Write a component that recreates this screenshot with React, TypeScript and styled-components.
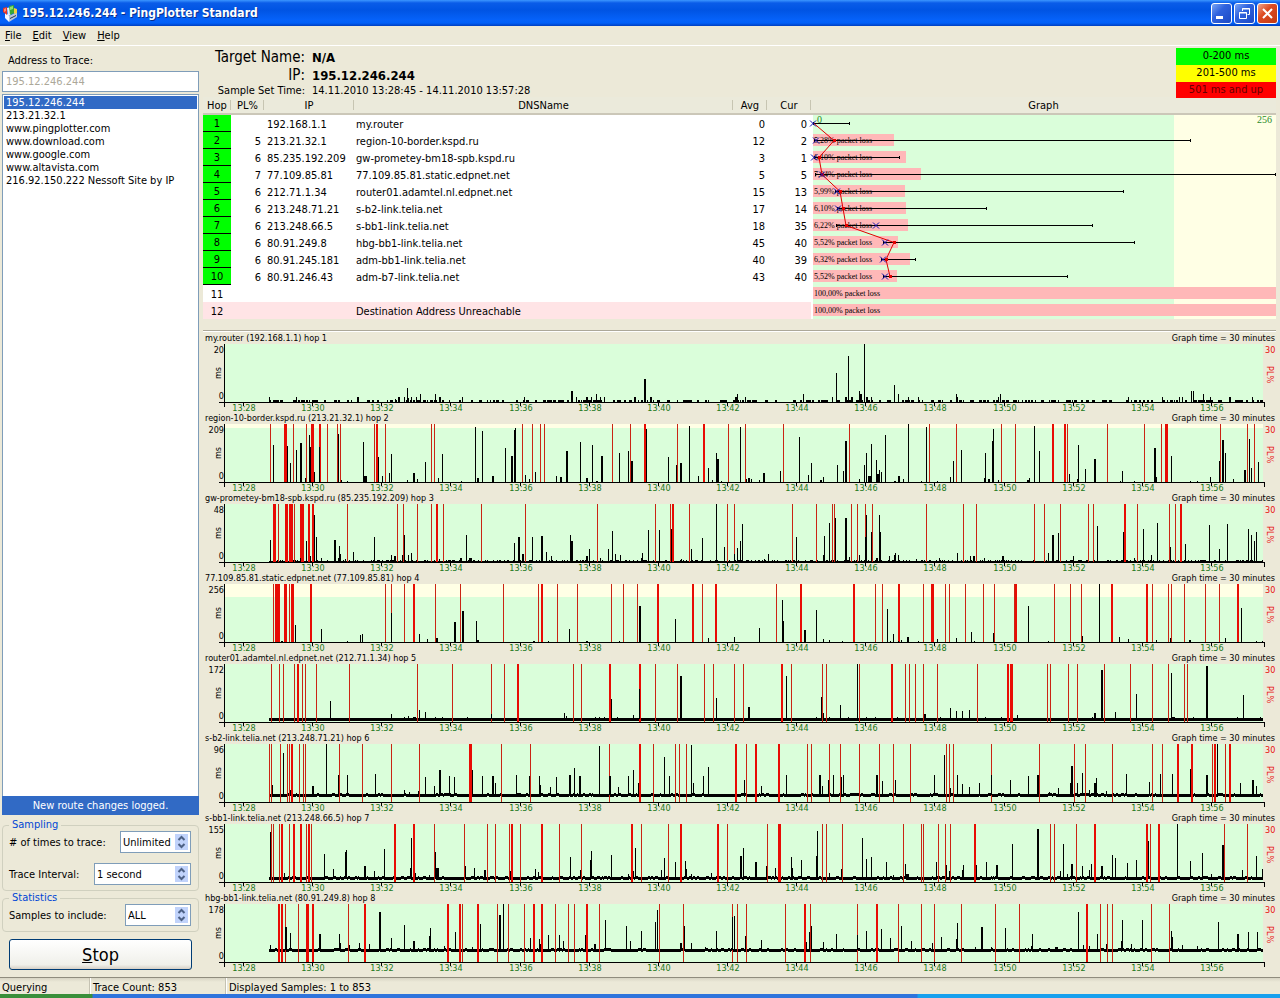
import React from "react";
import styled, { createGlobalStyle, css } from "styled-components";

const SANS = `"DejaVu Sans Condensed", "DejaVu Sans", "Liberation Sans", sans-serif`;
const FACE = "#ece9d8";
const BLUE = "#316ac5";

const Global = createGlobalStyle`
  * { box-sizing: border-box; }
  body { margin: 0; background: ${FACE}; font: 11px/13px ${SANS}; color: #000; }
  button, input { font: inherit; color: inherit; }
`;

const Window = styled.div`
  display: flex;
  flex-direction: column;
  min-height: 100vh;
`;

/* ---------- title bar and menu ---------- */

const TitleBar = styled.header`
  display: flex;
  align-items: center;
  height: 26px;
  padding: 0 2px;
  background: linear-gradient(#3c96ff 0, #0a5ce8 3px, #0054e3 10px, #0562fa 20px, #0160f8 23px, #003fc0 26px);
`;

const AppTitle = styled.h1`
  flex: 1;
  margin: 0 0 0 5px;
  font: bold 12px/26px ${SANS};
  color: #fff;
  text-shadow: 1px 1px #0a2f8c;
`;

const Caption = styled.button<{ $close?: boolean }>`
  width: 21px;
  height: 21px;
  margin-left: 2px;
  padding: 0;
  border: 1px solid #fff;
  border-radius: 3px;
  background: ${(p) =>
    p.$close
      ? "linear-gradient(135deg, #f0a58c, #dd4b22 40%, #c33a12)"
      : "linear-gradient(135deg, #7ba6f5, #2f62de 40%, #1c49c4)"};
  svg { display: block; }
`;

const MenuBar = styled.nav`
  display: flex;
  gap: 11px;
  height: 20px;
  padding-left: 5px;
  border-bottom: 1px solid #fff;
`;

const MenuLink = styled.a`
  color: #000;
  line-height: 19px;
  text-decoration: none;
`;

/* ---------- sidebar ---------- */

const Body = styled.div`
  display: flex;
  flex: 1;
`;

const Sidebar = styled.aside`
  display: flex;
  flex-direction: column;
  width: 199px;
  padding: 0 0 7px 2px;
`;

const AddressLabel = styled.label`
  padding: 8px 0 4px 6px;
`;

const AddressInput = styled.input`
  height: 21px;
  padding: 0 3px;
  border: 1px solid #7f9db9;
  background: #fff;
  &:disabled { color: #aca899; }
`;

const AddressList = styled.ul`
  flex: 1;
  margin: 2px 0 0;
  padding: 1px;
  border: 1px solid #7f9db9;
  border-bottom: 0;
  background: #fff;
  list-style: none;
`;

const AddressItem = styled.button<{ $selected?: boolean }>`
  display: block;
  width: 100%;
  height: 13px;
  padding: 0 2px;
  border: 0;
  background: ${(p) => (p.$selected ? BLUE : "transparent")};
  color: ${(p) => (p.$selected ? "#fff" : "#000")};
  text-align: left;
`;

const Notice = styled.div`
  height: 19px;
  margin-bottom: 4px;
  background: ${BLUE};
  color: #fff;
  line-height: 19px;
  text-align: center;
`;

const Group = styled.fieldset`
  display: flex;
  flex-direction: column;
  gap: 10px;
  margin: 0 0 1px;
  padding: 0 7px 5px 6px;
  border: 1px solid #d0d0bf;
  border-radius: 4px;
`;

const GroupTitle = styled.legend`
  padding: 0 3px;
  color: #0046d5;
  line-height: 12px;
`;

const Field = styled.div`
  display: flex;
  align-items: center;
  justify-content: space-between;
`;

const SpinBox = styled.div<{ $width: number }>`
  display: flex;
  width: ${(p) => p.$width}px;
  height: 22px;
  border: 1px solid #7f9db9;
  background: #fff;
`;

const SpinInput = styled.input`
  flex: 1;
  min-width: 0;
  padding: 0 2px;
  border: 0;
  background: transparent;
`;

const SpinButtons = styled.div`
  display: flex;
  flex-direction: column;
  width: 13px;
  margin: 2px;
`;

const SpinButton = styled.button`
  flex: 1;
  padding: 0;
  border: 0;
  background: #c1d3fb;
  svg { display: block; margin: 0 auto; }
`;

const StopButton = styled.button`
  height: 31px;
  margin: 6px 7px 0;
  border: 1px solid #003c74;
  border-radius: 3px;
  background: linear-gradient(#fff, #f0f0ea 85%, #d6d0c5);
  font-size: 18px;
  line-height: 28px;
`;

/* ---------- target summary ---------- */

const Main = styled.main`
  flex: 1;
  min-width: 0;
  padding: 0 4px 5px 2px;
  margin-left: 2px;
`;

const Summary = styled.section`
  display: flex;
  justify-content: space-between;
  height: 51px;
  padding-top: 2px;
`;

const Target = styled.dl`
  display: grid;
  grid-template-columns: 102px auto;
  grid-template-rows: 19px 17px 13px;
  column-gap: 7px;
  align-items: center;
  margin: 0;
  dt { text-align: right; white-space: nowrap; }
  dd { margin: 0; }
`;

const BigTerm = styled.dt`
  font-size: 15px;
`;

const BoldValue = styled.dd`
  font-size: 13px;
  font-weight: bold;
`;

const Legend = styled.ul`
  width: 100px;
  margin: 0;
  padding: 0;
  list-style: none;
`;

const LegendItem = styled.li<{ $color: string; $text?: string }>`
  height: 17px;
  background: ${(p) => p.$color};
  color: ${(p) => p.$text || "#000"};
  line-height: 15px;
  text-align: center;
  &:last-child { height: 16px; }
`;

/* ---------- trace table ---------- */

const TraceTable = styled.table`
  width: 100%;
  border-collapse: separate;
  border-spacing: 0;
  table-layout: fixed;
  background: #fff;
`;

const HeadCell = styled.th`
  height: 18px;
  padding: 1px 0 0;
  border-bottom: 2px solid #cbc7b8;
  background: #ebeadb;
  font-weight: normal;
  &:not(:last-child) {
    background: linear-gradient(#c7c5b2, #c7c5b2) right 3px / 1px 10px no-repeat #ebeadb;
  }
`;

const Cell = styled.td<{ $right?: boolean; $pad?: number }>`
  height: 17px;
  padding: 1px ${(p) => p.$pad ?? 3}px 0;
  text-align: ${(p) => (p.$right ? "right" : "left")};
  white-space: nowrap;
`;

const HopCell = styled.td<{ $ok: boolean }>`
  height: 17px;
  padding: 1px 0 0;
  line-height: 15px;
  text-align: center;
  ${(p) =>
    p.$ok &&
    css`
      border-bottom: 1px solid #000;
      background: #0f0;
    `}
`;

const TraceRow = styled.tr<{ $failed: boolean }>`
  background: ${(p) => (p.$failed ? "#ffe4e6" : "#fff")};
`;

const GraphCell = styled.td`
  padding: 0 0 0 2px;
  background: #fff;
  vertical-align: top;
  svg { display: block; }
`;

type Hop = {
  hop: number; pl?: number; ip?: string; name?: string; avg?: number; cur?: number;
  loss?: string; lossW?: number; line?: [number, number]; avgX?: number; curX?: number;
};

const HOPS: Hop[] = [
  { hop: 1, ip: "192.168.1.1", name: "my.router", avg: 0, cur: 0, line: [0, 36], avgX: 1, curX: 0 },
  { hop: 2, pl: 5, ip: "213.21.32.1", name: "region-10-border.kspd.ru", avg: 12, cur: 2, loss: "5,28", lossW: 81, line: [1, 377], avgX: 21, curX: 3 },
  { hop: 3, pl: 6, ip: "85.235.192.209", name: "gw-prometey-bm18-spb.kspd.ru", avg: 3, cur: 1, loss: "6,10", lossW: 93, line: [1, 86], avgX: 6, curX: 1 },
  { hop: 4, pl: 7, ip: "77.109.85.81", name: "77.109.85.81.static.edpnet.net", avg: 5, cur: 5, loss: "7,04", lossW: 108, line: [2, 462], avgX: 9, curX: 9 },
  { hop: 5, pl: 6, ip: "212.71.1.34", name: "router01.adamtel.nl.edpnet.net", avg: 15, cur: 13, loss: "5,99", lossW: 92, line: [22, 310], avgX: 27, curX: 24 },
  { hop: 6, pl: 6, ip: "213.248.71.21", name: "s-b2-link.telia.net", avg: 17, cur: 14, loss: "6,10", lossW: 93, line: [24, 173], avgX: 30, curX: 25 },
  { hop: 7, pl: 6, ip: "213.248.66.5", name: "s-bb1-link.telia.net", avg: 18, cur: 35, loss: "6,22", lossW: 95, line: [23, 279], avgX: 33, curX: 63 },
  { hop: 8, pl: 6, ip: "80.91.249.8", name: "hbg-bb1-link.telia.net", avg: 45, cur: 40, loss: "5,52", lossW: 85, line: [70, 321], avgX: 81, curX: 72 },
  { hop: 9, pl: 6, ip: "80.91.245.181", name: "adm-bb1-link.telia.net", avg: 40, cur: 39, loss: "6,32", lossW: 97, line: [68, 102], avgX: 73, curX: 70 },
  { hop: 10, pl: 6, ip: "80.91.246.43", name: "adm-b7-link.telia.net", avg: 43, cur: 40, loss: "5,52", lossW: 84, line: [70, 254], avgX: 77, curX: 72 },
  { hop: 11, loss: "100,00", lossW: 463 },
  { hop: 12, name: "Destination Address Unreachable", loss: "100,00", lossW: 463 },
];

const ROW = 17;
const mid = (i: number) => i * ROW + 8;

function TraceGraph() {
  const answered = HOPS.filter((h) => h.line);
  return (
    <svg width="100%" height={HOPS.length * ROW} role="img" aria-label="Latency per hop" overflow="visible">
      <svg width="100%" height={HOPS.length * ROW} viewBox={`0 0 463 ${HOPS.length * ROW}`} preserveAspectRatio="none" overflow="visible">
        <rect width="463" height="204" fill="#ffffe5" />
        <rect width="361" height="204" fill="#dafeda" />
        {HOPS.map((h, i) => h.loss && <rect key={h.hop} y={i * ROW + 2} width={h.lossW} height="12" fill="#ffb8b8" />)}
      </svg>
      <g fontFamily="Liberation Serif, serif" fontSize="8">
        {HOPS.map((h, i) => h.loss && <text key={h.hop} x="1" y={mid(i) + 3}>{h.loss}% packet loss</text>)}
      </g>
      <g fontFamily="Liberation Serif, serif" fontSize="10" fill="#2a8a2a">
        <text x="4" y="8">0</text>
        <text x="100%" dx="-4" y="8" textAnchor="end">256</text>
      </g>
      <svg width="100%" height={HOPS.length * ROW} viewBox={`0 0 463 ${HOPS.length * ROW}`} preserveAspectRatio="none" overflow="visible">
        <g stroke="#000" shapeRendering="crispEdges">
          {answered.map((h, i) => (
            <path key={h.hop} d={`M${h.line![0]} ${mid(i) + 0.5}H${h.line![1]}M${h.line![1] + 0.5} ${mid(i) - 1}v3M${h.line![0] + 0.5} ${mid(i) - 1}v3`} />
          ))}
        </g>
        <polyline fill="none" stroke="#e00000" points={answered.map((h, i) => `${h.avgX} ${mid(i) + 0.5}`).join(" ")} />
        {answered.map((h, i) => (
          <g key={h.hop}>
            {i > 0 && <rect x={h.avgX! - 1} y={mid(i) - 1} width="3" height="3" fill="#e00000" />}
            <path stroke="#1010b0" d={`M${h.curX! - 3} ${mid(i) - 2.5}l6 6m0-6l-6 6`} />
          </g>
        ))}
      </svg>
    </svg>
  );
}

/* ---------- timeline strips ---------- */

const Timelines = styled.section`
  margin-top: 11px;
  border-top: 1px solid #aca899;
  box-shadow: inset 0 1px #fff;
  padding-top: 1px;
`;

const Strip = styled.article`
  display: grid;
  grid-template-columns: 22px minmax(0, 1fr) 11px;
  grid-template-rows: 12px 58px 10px;
  font-size: 9px;
  line-height: 12px;
`;

const StripHead = styled.header`
  display: flex;
  grid-column: 1 / -1;
  justify-content: space-between;
  padding: 0 1px 0 2px;
`;

const Scale = styled.div`
  display: flex;
  flex-direction: column;
  justify-content: space-between;
  align-items: flex-end;
  height: 58px;
  padding-right: 1px;
`;

const LossScale = styled.div`
  display: flex;
  flex-direction: column;
  gap: 10px;
  color: #e81010;
`;

const Turned = styled.span<{ $up?: boolean }>`
  writing-mode: vertical-rl;
  transform: ${(p) => (p.$up ? "rotate(180deg)" : "none")};
`;

const Plot = styled.svg`
  display: block;
  width: 100%;
  height: 68px;
  overflow: visible;
`;

const PLOT_W = 1040;
const PLOT_H = 58;

/* Each log holds "time:height*width" marks; time counts hundredths of a minute from the log's own start. */
const EARLY = -72;
const LATE = 1496;
const UNITS_PER_PX = 2.904;

type Mark = { left: number; h: number; w: number };
const parse = (log: string, start: number): Mark[] =>
  log.trim().split(/\s+/).filter(Boolean).map((item) => {
    const [head, w = "1"] = item.split("*");
    const [t, h = "58"] = head.split(":");
    const width = Number(w);
    const centre = (Number(t) + start) / UNITS_PER_PX;
    return { left: Math.round(centre + 0.2 - width / 2), h: Number(h), w: width };
  });

type StripData = {
  title: string; max: number; warn?: number; noise?: number; band?: number;
  lost: [string, string]; peaks: [string, string];
};

const STRIPS: StripData[] = [
  {
    title: "my.router (192.168.1.1) hop 1", max: 20, noise: 0.5,
    lost: ["", ""],
    peaks: [
      "201:5 213:2 278:5 459:5*2 567:3 577:5*2 593:5 602:14 605:4 614:5 628:5 640:8 684:8 697:5*2 760:5 942:5 1078:11*2 1093:5 1123:5*2 1137:5 1151:8 1162:5 1174:5 1262:5*2 1292:23*2 1309:5*2 1555:5*2 1560:8",
      "14:5 184:8 268:5 278:29 307:5*2 313:46 324:5*2 345:11 351:8*2 361:58 368:5*2 382:5 448:17 458:8 489:5 516:5 628:8 632:5 750:5 756:8 1128:5 1227:5 1276:5 1284:5 1309:11 1316:11 1345:8 1366:5 1423:5*2 1486:5",
    ],
  },
  {
    title: "region-10-border.kspd.ru (213.21.32.1) hop 2", max: 209, warn: 4,
    lost: [
      "204 248*3 271 309 326*3 348*2 368 399 408 507 514*2 538 672 680 934 963 989 1000 1198 1250 1292*2 1386 1463*2 1534",
      "16 124 316 550 629 757 798 909*2 944*2 951 1067 1175 1223 1238*3 1395 1473 1494",
    ],
    peaks: [
      "213:37 254:36 262:19 278:32 293:39*2 304:4 318:47 321:35 332:10 345:35 402:48 410:2 428:1 475:40 479:6*3 517:25 529:6 550:9 556:28 602:2 620:9*2 630:3 655:20 692:4 704:28 757:1 800:55 806:4*2 820:51 851:6*2 887:34 906:26*2 913:52 916:54 945:7 957:3 974:10 1033:6 1047:5*2 1065:31*2 1104:40 1124:4*2 1139:37 1153:1*2 1167:26*2 1218:29 1242:31 1253:21*2 1296:53 1360:25 1384:17 1397:19*2 1421:56 1447:6 1476:14 1488:2 1499:29 1504:23*2 1512:1 1567:55",
      "19:3 26:4*2 33:3 57:2 70:9*2 118:11 172:45 198:7 207:19 234:2*2 242:5 283:17 300:11 308:41*2 345:3 361:17 367:29 375:6*3 382:38 394:22 397:8*3 403:12 411:10 422:47 450:1*2 462:6*2 475:3 489:58 525:1 541:55 573:1 609:5 620:21 641:32 708:4 712:29 722:3*2 733:41 736:53 750:2 836:2*2 841:4 855:56 869:31 956:8 978:3 982:37 1003:13 1031:23*2 1103:1 1110:11 1146:1 1205:34*2 1209:5 1253:26 1308:1 1329:1 1366:5 1392:21 1402:42*2 1410:29 1433:3 1466:12*2 1479:43 1485:14 1506:20",
    ],
  },
  {
    title: "gw-prometey-bm18-spb.kspd.ru (85.235.192.209) hop 3", max: 48, band: 1,
    lost: [
      "216*3 227 251*3 264*4 274 296*4 314*2 328*2 426 573 590 629 672 688*2 707 817 945 1152 1322 1366 1373*2 1421 1531 1552",
      "152 222 268 274 323 339 364 384 541 649 686 855 884 931 1012 1026 1118*2 1154 1245 1264 1280*2",
    ],
    peaks: [
      "204:22 290:4 309:21 320:6 332:47 338:25 352:4 392:22*2 402:4 405:16 408:8 421:3 445:10 507:25 556:7 566:6*2 586:7 593:27 605:7 614:9 628:2 695:3 757:4*2 774:27 785:4*3 913:19 926:25*2 938:8*2 963:25 993:26*2 1004:10 1020:6 1076:27 1079:21*2 1124:6*2 1131:13 1162:4 1184:13 1198:31 1204:8 1221:7 1280:4 1285:9 1302:32 1334:32 1369:33 1397:3 1427:13 1459:24 1499:58 1523:15 1550:8 1560:14 1567:21",
      "7:38 70:3 82:8 164:25 242:7 245:26 260:39 277:44 308:44*2 316:5 345:7 362:25 367:47 382:30 398:4*2 405:47 408:30 434:6 447:7 451:9 458:7 512:3 577:4 631:9 669:6 679:6*2 708:4 764:6*2 895:9 909:27*2 924:29 968:6 1038:36 1114:30 1145:4 1172:33 1194:7 1212:39 1250:15 1293:18 1363:37 1392:13 1415:38 1476:33 1485:27 1494:21 1499:30",
    ],
  },
  {
    title: "77.109.85.81.static.edpnet.net (77.109.85.81) hop 4", max: 256, warn: 13,
    lost: [
      "213 225*5 248*3 259 268*3 320*2 538 554 593 621*2 684 754 879 983 993*2 1038 1096 1194 1230 1270 1330*2 1431*2 1459 1496*2",
      "106 177*2 331*2 393 414 462*2 532 559*3 596 608 654 707 739 795 801*2 913 960 992 1080*2 1181*2 1197 1242 1252 1290 1351 1390 1446*2",
    ],
    peaks: [
      "237:1*2 275:17 352:13 426:1 466:7 472:8 556:29 637:8 660:3 686:4*2 740:20*2 764:31*2 802:21 806:2*2 970:1*2 1012:1 1073:13 1124:1*2 1218:1 1278:36*2 1380:23 1476:4 1552:5",
      "57:14 121:42 124:21 185:3 189:12*2 222:32 242:3 260:2 297:1 428:33 435:1 446:8 458:1 468:2 486:5*2 516:1 573:3 628:4 672:10 679:1 736:9 838:36 895:1 994:6 1043:58 1102:5 1128:3 1209:2 1250:4 1307:2*2 1410:4 1456:34 1499:1 1517:1",
    ],
  },
  {
    title: "router01.adamtel.nl.edpnet.net (212.71.1.34) hop 5", max: 172, band: 4, noise: 0.03,
    lost: [
      "207 230 242 274 282*2 297 306 338 432 631 733 846 884 921*2 1084 1107 1190*2 1278*2 1322 1386 1465 1491 1550",
      "10 122*2 149 240 249 347 441*2 480 492 509 532 573 689 777*2 788*3 892 901 953 980 1058 1134 1197 1242 1290 1299",
    ],
    peaks: [
      "378:21 556:8 593:5 605:6 621:5*3 637:12 655:10 684:5 702:5 776:5 844:8 1058:9 1062:6 1147:5 1160:5 1174:5 1194:23 1211:5 1258:7 1274:33 1397:46*2 1499:24",
      "26:15*2 135:46 222:5 237:25 242:9 260:5 291:17 313:5 339:58 365:5 393:5 455:5 536:8*2 580:5 611:14 629:11 646:11 664:12 712:5 757:5 805:7 1024:5 1031:9*2 1051:52*2 1090:10 1151:28 1252:49 1257:5*3 1316:5 1356:56*2 1445:5 1460:27 1510:5",
    ],
  },
  {
    title: "s-b2-link.telia.net (213.248.71.21) hop 6", max: 96, band: 8, noise: 0.2,
    lost: [
      "201 207 234 254 260 267*2 288 300 306 403 472 554 637 785*3 875 960 1187 1278*2 1317 1380 1392 1412 1556*2",
      "18 46*2 113*2 196 207 260 291 345 405 446 495 600 608 619 728 869 971 1003 1081 1197 1227 1272*2 1312*2 1372 1379*2 1409 1423*2",
    ],
    peaks: [
      "210:17 242:49 262:12 327:16*2 367:58 400:27 428:27 509:28 593:12 606:10 634:11 655:25 680:16 697:32*2 722:9*3 724:26 737:25 791:32 820:26 851:26*2 858:19 919:27 925:9*4 957:26 985:26 989:17 1018:15 1035:25 1072:27*2 1087:34 1101:26*2 1158:16 1160:56 1190:26*2 1215:15 1242:26 1258:32 1273:19 1348:45 1363:26 1425:57 1431:19 1462:26 1476:35",
      "13:22 62:16 135:27 232:27*2 239:16 257:22 271:27 294:25 300:27 398:27*2 413:21 451:22 564:27 593:47 611:14 631:27 646:18 664:15 695:19 730:27 785:22 838:26 865:27*2 898:10 925:14 960:19 964:36*2 980:19 994:29 1014:12 1031:19*2 1035:24 1064:11 1122:28 1189:20 1221:28 1255:28 1308:33 1356:27*2 1386:58 1453:19 1490:22*2 1499:16",
    ],
  },
  {
    title: "s-bb1-link.telia.net (213.248.66.5) hop 7", max: 155, band: 5, noise: 0.3,
    lost: [
      "207 213 230 237*2 259 273*2 292*2 307 314*2 323 566*2 621*2 681 768 834 857 898 906*2 931 993*2 1043 1107 1253*2 1282 1360 1397*2 1504*2 1531",
      "79 115*3 239 249 297 475 527 532 576 596 611 680*2 901 913 977 1031*2 1181*2 1191 1217*2 1406 1473",
    ],
    peaks: [
      "204:50 245:9 361:28 387:13 421:30 423:32 479:16*2 507:11 535:33 609:14 612:44 625:9 665:7 683:30 688:14*3 770:16 797:14 827:12*2 901:11 974:13 982:10 1075:25 1104:12 1134:22 1136:31 1194:27 1242:8 1258:11 1264:34 1340:12 1348:24 1380:20 1410:21 1412:13 1425:8 1485:9",
      "3:26*2 8:34 46:20*2 76:16 103:14 149:25 152:14 178:22 222:26 225:51 259:9 295:13 355:44 365:23 381:25 425:20 446:7 480:18 484:8*3 570:20 599:17 608:11 644:12 647:17 686:17 715:20 746:17*2 791:38 862:12 865:53*2 931:11 937:38 949:8 964:18*2 994:16 1014:12 1020:18 1051:16*2 1081:27 1090:24 1125:19 1151:22 1186:41 1270:58 1308:21 1343:29 1369:8 1402:37*2 1459:12 1499:26 1517:13",
    ],
  },
  {
    title: "hbg-bb1-link.telia.net (80.91.249.8) hop 8", max: 178, band: 13, noise: 0.25,
    lost: [
      "229*2 238*2 246 286 312*3 328*2 429 479*2 720*2 753*2 760 807*2 864 896 942 970*2 993*2 1030 1070 1087 1124*2 1158 1334 1403 1546 1560",
      "18 132 189*2 204 339 398*2 458 525 565 641 742 811 1007*2 1047 1067 1081 1194 1247",
    ],
    peaks: [
      "204:17 248:35*2 262:29 347:28*2 405:28 408:19 432:17 463:19 490:18 519:29 522:50*2 556:24 593:37 620:21*2 666:26*2 669:34 710:16 740:30 791:15 814:38 871:47*2 881:58 960:24 986:23 989:18 1011:27 1043:27 1055:21 1119:27 1147:18*2 1177:42 1238:36 1248:21 1282:31 1323:40 1326:52 1397:19*2 1406:36 1425:19 1467:15 1499:31 1544:45 1552:46",
      "16:26 60:22 193:20 202:30 207:36 242:20 280:28 341:27 367:31 411:33 437:24 468:36 498:21 557:19 585:25 629:23 631:39 684:15 703:35*2 730:15 770:34 845:16 849:28 919:15*3 982:50 997:17 1014:16 1038:28 1064:18 1107:21 1110:42 1137:18 1168:42 1252:31 1255:25 1284:17 1329:16 1389:40 1445:28*2 1476:30 1502:30",
    ],
  },
];

/* Jitter of the idle samples, repeatable from one render to the next. */
function floorPath(band: number, noise: number, seed: number) {
  let s = seed * 7919 + 13;
  const next = () => ((s = (s * 16807) % 2147483647) / 2147483647);
  let d = "";
  let run = 0;
  for (let x = 44; x < 1038; x++) {
    if (run <= 0) run = next() < noise * 0.5 ? 1 + Math.floor(next() * 3) : -1 - Math.floor(next() * 2);
    const up = run > 0 ? 1 : 0;
    run = run > 0 ? run - 1 : 0;
    if (band === 0) {
      if (up) d += `M${x} ${PLOT_H}v-2h1v2z`;
    } else {
      const thick = band === 1 ? 1 + (next() < 0.3 ? 1 : 0) : 3;
      const top = PLOT_H - band - (band > 4 ? up : 0) - (band === 1 ? thick - 1 : 0);
      d += `M${x} ${top}h1v${thick}h-1z`;
    }
  }
  return d;
}

const TIMES = Array.from({ length: 15 }, (_, i) => 28 + i * 2);
const tickX = (i: number) => 19 + Math.round(i * 69.14);

const bars = (marks: Mark[], foot: number) =>
  marks.map((m) => `M${m.left} ${PLOT_H - m.h}h${m.w}V${foot}h-${m.w}z`).join("");

function Timeline({ data, index }: { data: StripData; index: number }) {
  const lost = [...parse(data.lost[0], EARLY), ...parse(data.lost[1], LATE)];
  const peaks = [...parse(data.peaks[0], EARLY), ...parse(data.peaks[1], LATE)];
  const band = data.band ?? 0;
  const foot = band > 1 ? PLOT_H - band + 1 : PLOT_H;
  return (
    <Strip>
      <StripHead>
        <span>{data.title}</span>
        <span>Graph time = 30 minutes</span>
      </StripHead>
      <Scale>
        <span>{data.max}</span>
        <Turned $up>ms</Turned>
        <span>0</span>
      </Scale>
      <Plot role="img" aria-label={data.title}>
        <svg width="100%" height={PLOT_H} viewBox={`0 0 ${PLOT_W} ${PLOT_H}`} preserveAspectRatio="none">
          <g shapeRendering="crispEdges">
            <rect width="1038" height={PLOT_H} fill="#dafeda" />
            {data.warn && <rect width="1038" height={data.warn} fill="#ffffe5" />}
            {(band > 0 || data.noise) && <path d={floorPath(band, data.noise ?? 0, index + 1)} />}
            <path fill="#ca2414" d={bars(lost.filter((m) => m.w === 1), PLOT_H)} />
            <path fill="#e80c04" d={bars(lost.filter((m) => m.w > 1), PLOT_H)} />
            <path d={bars(peaks, foot)} />
          </g>
        </svg>
        <g stroke="#000" shapeRendering="crispEdges">
          <path d="M-0.5 0v63" />
          <line x1="-6" x2="100%" y1="58.5" y2="58.5" />
        </g>
        <svg x="100%" width="1" height="68" overflow="visible">
          <path d="M-0.5 58v5" stroke="#000" />
        </svg>
        {TIMES.map((m, i) => (
          <svg key={m} x={`${(tickX(i) / PLOT_W) * 100}%`} overflow="visible">
            <path d="M-0.5 59v3" stroke="#000" shapeRendering="crispEdges" />
            <text y="67" textAnchor="middle" fill="#187818">13:{m}</text>
          </svg>
        ))}
      </Plot>
      <LossScale>
        <span>30</span>
        <Turned>PL%</Turned>
      </LossScale>
    </Strip>
  );
}

/* ---------- status bar ---------- */

const StatusBar = styled.footer`
  display: flex;
  height: 17px;
  border-top: 1px solid #8f8c7d;
  background: linear-gradient(#d8d5c4, #ece9d8 4px);
`;

const StatusPane = styled.span<{ $width?: number }>`
  width: ${(p) => (p.$width ? `${p.$width}px` : "auto")};
  padding-left: 2px;
  line-height: 19px;
  & + & { padding-left: 4px; box-shadow: inset 1px 0 #c5c2b2, inset 2px 0 #fff; }
`;

const TaskbarEdge = styled.div`
  height: 4px;
  background: linear-gradient(90deg, #3a8f3a 0 92px, #2f74dc 93px 917px, #17a0ee 918px);
`;

const Chevron = ({ up }: { up?: boolean }) => (
  <svg width="9" height="8" viewBox="0 0 9 8">
    <path d={up ? "M1.5 6l3-3 3 3" : "M1.5 2l3 3 3-3"} fill="none" stroke="#4d6185" strokeWidth="2" />
  </svg>
);

function Spinner({ id, value, width }: { id: string; value: string; width: number }) {
  return (
    <SpinBox $width={width}>
      <SpinInput id={id} defaultValue={value} />
      <SpinButtons>
        <SpinButton aria-label="Increase"><Chevron up /></SpinButton>
        <SpinButton aria-label="Decrease"><Chevron /></SpinButton>
      </SpinButtons>
    </SpinBox>
  );
}

const AppIcon = () => (
  <svg width="15" height="18" viewBox="0 0 15 18">
    <path d="M3 7l4 5v6l-4-4z" fill="#f4f8ff" />
    <path d="M7 12l8-4v5l-8 5z" fill="#b9c6da" />
    <path d="M8 14l6-3v1l-6 3z" fill="#2b3550" />
    <path d="M1 4l4-1v8l-4-3z" fill="#e2352a" />
    <path d="M2 5l2-1v3l-2 1z" fill="#ff8a70" />
    <path d="M5 4l4-1v8l-3 1z" fill="#e6f0ff" />
    <path d="M7 2l5-1v8l-4 2z" fill="#38a838" />
    <path d="M8 3l3-1v3l-3 1z" fill="#8fe070" />
    <path d="M12 4l3 1v4l-3 1z" fill="#f0d040" />
  </svg>
);

const ADDRESSES = [
  "195.12.246.244", "213.21.32.1", "www.pingplotter.com", "www.download.com",
  "www.google.com", "www.altavista.com", "216.92.150.222 Nessoft Site by IP",
];

export default function App() {
  return (
    <Window>
      <Global />
      <TitleBar>
        <AppIcon />
        <AppTitle>195.12.246.244 - PingPlotter Standard</AppTitle>
        <Caption aria-label="Minimize">
          <svg width="19" height="19"><rect x="4" y="12" width="7" height="3" fill="#fff" /></svg>
        </Caption>
        <Caption aria-label="Restore">
          <svg width="19" height="19" fill="none" stroke="#fff">
            <path d="M7.5 7V4.5h7v6h-2M7 5h8" />
            <path d="M4.5 8.5h7v6h-7zM4 9h8" />
          </svg>
        </Caption>
        <Caption $close aria-label="Close">
          <svg width="19" height="19"><path d="M5 5l9 9m0-9l-9 9" stroke="#fff" strokeWidth="2" /></svg>
        </Caption>
      </TitleBar>
      <MenuBar>
        {["File", "Edit", "View", "Help"].map((m) => (
          <MenuLink key={m} href="#"><u>{m[0]}</u>{m.slice(1)}</MenuLink>
        ))}
      </MenuBar>
      <Body>
        <Sidebar>
          <AddressLabel htmlFor="address">Address to Trace:</AddressLabel>
          <AddressInput id="address" defaultValue="195.12.246.244" disabled />
          <AddressList>
            {ADDRESSES.map((a, i) => (
              <li key={a}><AddressItem $selected={i === 0}>{a}</AddressItem></li>
            ))}
          </AddressList>
          <Notice>New route changes logged.</Notice>
          <Group>
            <GroupTitle>Sampling</GroupTitle>
            <Field>
              <label htmlFor="times"># of times to trace:</label>
              <Spinner id="times" value="Unlimited" width={71} />
            </Field>
            <Field>
              <label htmlFor="interval">Trace Interval:</label>
              <Spinner id="interval" value="1 second" width={97} />
            </Field>
          </Group>
          <Group>
            <GroupTitle>Statistics</GroupTitle>
            <Field>
              <label htmlFor="samples">Samples to include:</label>
              <Spinner id="samples" value="ALL" width={66} />
            </Field>
          </Group>
          <StopButton><u>S</u>top</StopButton>
        </Sidebar>
        <Main>
          <Summary>
            <Target>
              <BigTerm>Target Name:</BigTerm>
              <BoldValue>N/A</BoldValue>
              <BigTerm>IP:</BigTerm>
              <BoldValue>195.12.246.244</BoldValue>
              <dt>Sample Set Time:</dt>
              <dd>14.11.2010 13:28:45 - 14.11.2010 13:57:28</dd>
            </Target>
            <Legend>
              <LegendItem $color="#0f0">0-200 ms</LegendItem>
              <LegendItem $color="#ff0">201-500 ms</LegendItem>
              <LegendItem $color="#f00" $text="#600">501 ms and up</LegendItem>
            </Legend>
          </Summary>
          <TraceTable>
            <colgroup>
              <col width="28" />
              <col width="33" />
              <col width="90" />
              <col width="379" />
              <col width="34" />
              <col width="44" />
              <col />
            </colgroup>
            <thead>
              <tr>
                {["Hop", "PL%", "IP", "DNSName", "Avg", "Cur", "Graph"].map((h) => <HeadCell key={h}>{h}</HeadCell>)}
              </tr>
            </thead>
            <tbody>
              {HOPS.map((h, i) => (
                <TraceRow key={h.hop} $failed={h.hop === 12}>
                  <HopCell $ok={h.hop <= 10}>{h.hop}</HopCell>
                  <Cell $right>{h.pl}</Cell>
                  <Cell>{h.ip}</Cell>
                  <Cell $pad={2}>{h.name}</Cell>
                  <Cell $right $pad={2}>{h.avg}</Cell>
                  <Cell $right $pad={4}>{h.cur}</Cell>
                  {i === 0 && <GraphCell rowSpan={HOPS.length}><TraceGraph /></GraphCell>}
                </TraceRow>
              ))}
            </tbody>
          </TraceTable>
          <Timelines>
            {STRIPS.map((s, i) => <Timeline key={s.title} data={s} index={i} />)}
          </Timelines>
        </Main>
      </Body>
      <StatusBar>
        <StatusPane $width={89}>Querying</StatusPane>
        <StatusPane $width={136}>Trace Count: 853</StatusPane>
        <StatusPane>Displayed Samples: 1 to 853</StatusPane>
      </StatusBar>
      <TaskbarEdge />
    </Window>
  );
}
